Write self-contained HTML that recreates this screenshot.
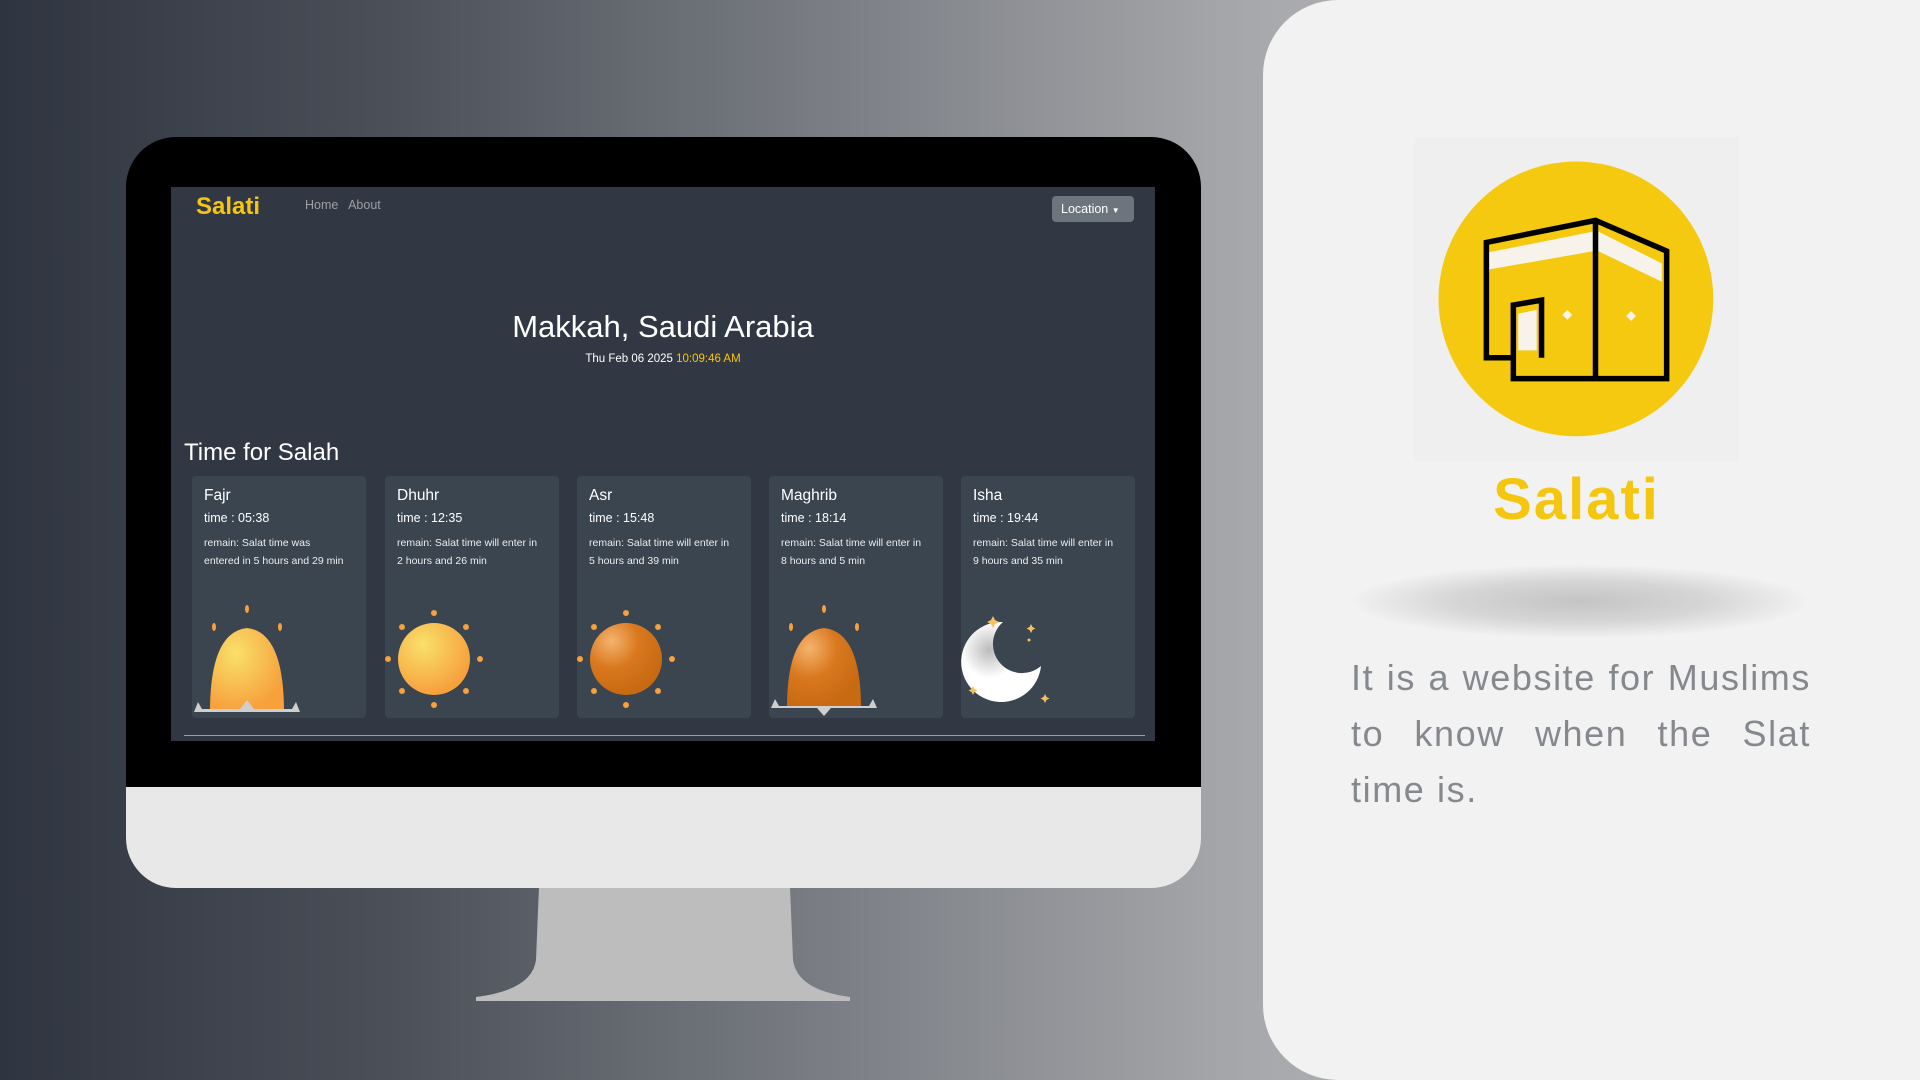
<!DOCTYPE html>
<html><head><meta charset="utf-8"><style>
*{margin:0;padding:0;box-sizing:border-box}
body{width:1920px;height:1080px;overflow:hidden;position:relative;font-family:"Liberation Sans",sans-serif;background:linear-gradient(90deg,#2f3540 0%,#4a4f58 20%,#7e8187 45%,#a7a8ab 65%,#b6b7b9 80%)}
.abs{position:absolute}
.panel{left:1263px;top:0;width:657px;height:1080px;background:#f2f2f2;border-radius:75px 0 0 75px}
.mon{left:126px;top:137px;width:1075px;height:651px;background:#000;border-radius:50px 50px 0 0}
.chin{left:126px;top:787px;width:1075px;height:101px;background:#e8e8e8;border-radius:0 0 50px 50px}
.screen{left:171px;top:187px;width:984px;height:554px;background:#323843;color:#fff;overflow:hidden}
.card{position:absolute;top:289px;width:174px;height:242px;background:#3a4550;border-radius:4px;padding:10px 12px}
.card h4{font-size:15.5px;font-weight:normal;margin-top:1px}
.card .t{font-size:12.5px;margin-top:6px}
.card .r{font-size:10.5px;line-height:18px;margin-top:9px;color:#eee;width:141px}
.card svg{position:absolute;left:0;top:132px}
.desc{left:1351px;top:650px;width:460px;font-family:"Liberation Sans",sans-serif;font-size:36px;line-height:56px;color:#85888d;text-align:justify;letter-spacing:1.6px}
</style></head><body>
<div class="abs panel"></div>
<svg class="abs" style="left:0;top:0" width="1263" height="1080"><path d="M539 887 L790 887 L793 960 Q797 990 850 997 L850 1001 L476 1001 L476 997 Q532 990 536 960 Z" fill="#bdbdbd"/></svg>
<div class="abs mon"></div>
<div class="abs chin"></div>
<div class="abs screen">
 <div class="abs" style="left:25px;top:3px;font-size:24px;font-weight:bold;color:#f5c60f;line-height:34px">Salati</div>
 <div class="abs" style="left:134px;top:11px;font-size:12.5px;color:#9aa0a6">Home&nbsp;&nbsp; About</div>
 <div class="abs" style="left:881px;top:9px;width:82px;height:26px;background:#6c757d;border-radius:4px;font-size:12.5px;line-height:26px;padding-left:9px">Location <span style="font-size:8px">▼</span></div>
 <div class="abs" style="left:0;width:984px;top:122px;text-align:center;font-size:31px;font-weight:300">Makkah, Saudi Arabia</div>
 <div class="abs" style="left:0;width:984px;top:166px;text-align:center;font-size:11.5px">Thu Feb 06 2025 <span style="color:#f5c60f">10:09:46 AM</span></div>
 <div class="abs" style="left:13px;top:252px;font-size:24px">Time for Salah</div>
 <svg width="0" height="0" style="position:absolute"><defs>
  <radialGradient id="g1" cx="35%" cy="30%" r="70%"><stop offset="0" stop-color="#f9e06a"/><stop offset="1" stop-color="#f7a03c"/></radialGradient>
  <radialGradient id="g2" cx="30%" cy="25%" r="75%"><stop offset="0" stop-color="#f5b46e"/><stop offset=".5" stop-color="#d9781e"/><stop offset="1" stop-color="#c86a12"/></radialGradient>
  <radialGradient id="g3" cx="35%" cy="35%" r="70%"><stop offset="0" stop-color="#bbb"/><stop offset=".5" stop-color="#fff"/></radialGradient>
 </defs></svg>
 <div class="card" style="left:21px"><h4>Fajr</h4><div class="t">time : 05:38</div><div class="r">remain: Salat time was entered in 5 hours and 29 min</div>
  <svg width="174" height="114" style="top:128px"><path d="M18 108 Q18 28 55 24 Q92 28 92 108 Z" fill="url(#g1)"/><ellipse cx="55" cy="5" rx="2" ry="4" fill="#f7a03c"/><ellipse cx="22" cy="23" rx="2" ry="4" fill="#f7a03c"/><ellipse cx="88" cy="23" rx="2" ry="4" fill="#f7a03c"/><path d="M2 108 L6 98 L10 105 L48 105 L55 96 L62 105 L100 105 L104 98 L108 108 Z" fill="#cfcfcf"/></svg></div>
 <div class="card" style="left:214px"><h4>Dhuhr</h4><div class="t">time : 12:35</div><div class="r">remain: Salat time will enter in 2 hours and 26 min</div>
  <svg width="174" height="114"><circle cx="49" cy="51" r="36" fill="url(#g1)"/><g fill="#f7a03c"><circle cx="49" cy="5" r="3"/><circle cx="49" cy="97" r="3"/><circle cx="3" cy="51" r="3"/><circle cx="95" cy="51" r="3"/><circle cx="17" cy="19" r="3"/><circle cx="81" cy="19" r="3"/><circle cx="17" cy="83" r="3"/><circle cx="81" cy="83" r="3"/></g></svg></div>
 <div class="card" style="left:406px"><h4>Asr</h4><div class="t">time : 15:48</div><div class="r">remain: Salat time will enter in 5 hours and 39 min</div>
  <svg width="174" height="114"><circle cx="49" cy="51" r="36" fill="url(#g2)"/><g fill="#f7a03c"><circle cx="49" cy="5" r="3"/><circle cx="49" cy="97" r="3"/><circle cx="3" cy="51" r="3"/><circle cx="95" cy="51" r="3"/><circle cx="17" cy="19" r="3"/><circle cx="81" cy="19" r="3"/><circle cx="17" cy="83" r="3"/><circle cx="81" cy="83" r="3"/></g></svg></div>
 <div class="card" style="left:598px"><h4>Maghrib</h4><div class="t">time : 18:14</div><div class="r">remain: Salat time will enter in 8 hours and 5 min</div>
  <svg width="174" height="114" style="top:128px"><path d="M18 104 Q18 28 55 24 Q92 28 92 104 Z" fill="url(#g2)"/><ellipse cx="55" cy="5" rx="2" ry="4" fill="#f7a03c"/><ellipse cx="22" cy="23" rx="2" ry="4" fill="#f7a03c"/><ellipse cx="88" cy="23" rx="2" ry="4" fill="#f7a03c"/><path d="M2 104 L6 95 L10 102 L100 102 L104 95 L108 104 L62 104 L55 112 L48 104 Z" fill="#cfcfcf"/></svg></div>
 <div class="card" style="left:790px"><h4>Isha</h4><div class="t">time : 19:44</div><div class="r">remain: Salat time will enter in 9 hours and 35 min</div>
  <svg width="174" height="114"><path d="M42 14 A40 40 0 1 0 80 58 A28 28 0 0 1 42 14 Z" fill="url(#g3)"/><g fill="#f5c060"><path d="M32 8 l2 4 4 2 -4 2 -2 4 -2 -4 -4 -2 4 -2z"/><path d="M70 16 l1.5 3 3 1.5 -3 1.5 -1.5 3 -1.5 -3 -3 -1.5 3 -1.5z"/><circle cx="68" cy="32" r="1.5"/><path d="M84 86 l1.5 3 3 1.5 -3 1.5 -1.5 3 -1.5 -3 -3 -1.5 3 -1.5z"/><path d="M12 78 l1.5 3 3 1.5 -3 1.5 -1.5 3 -1.5 -3 -3 -1.5 3 -1.5z"/></g></svg></div>
 <div class="abs" style="left:13px;top:548px;width:961px;height:1px;background:#9aa0a6"></div>
</div>
<svg class="abs" style="left:1414px;top:137px" width="325" height="325" viewBox="1155 112 265 265">
 <rect x="1155" y="112" width="265" height="265" fill="#efefef"/>
 <circle cx="1287" cy="244" r="112" fill="#f5c90f"/>
 <path d="M1216 206 L1302 189 L1302 205 L1216 220 Z" fill="#f7f3ea"/>
 <path d="M1305 189 L1357 215 L1357 230 L1305 205 Z" fill="#f7f3ea"/>
 <g fill="none" stroke="#000" stroke-width="4.5" stroke-linejoin="miter">
  <path d="M1236 292 L1214 292 L1214 198 L1303 180 L1361 205 L1361 309 L1236 309 L1236 249 L1259 245 L1259 292"/>
  <path d="M1303 180 L1303 309"/>
 </g>
 <path d="M1240 256 L1255 253 L1255 286 L1240 286 Z" fill="#f7f3ea"/>
 <path d="M1280 253 l4 4 -4 4 -4 -4z M1332 254 l4 4 -4 4 -4 -4z" fill="#f7f3ea"/>
</svg>
<div class="abs" style="left:1414px;width:325px;top:466px;text-align:center;font-family:'Liberation Sans',sans-serif;font-weight:bold;font-size:58px;color:#f5c60f;letter-spacing:2px">Salati</div>
<div class="abs" style="left:1353px;top:565px;width:453px;height:73px;border-radius:50%;background:radial-gradient(ellipse at center,#c4c4c4 0%,#d6d6d6 40%,rgba(242,242,242,0) 72%)"></div>
<div class="abs desc">It is a website for Muslims to know when the Slat time is.</div>
</body></html>
